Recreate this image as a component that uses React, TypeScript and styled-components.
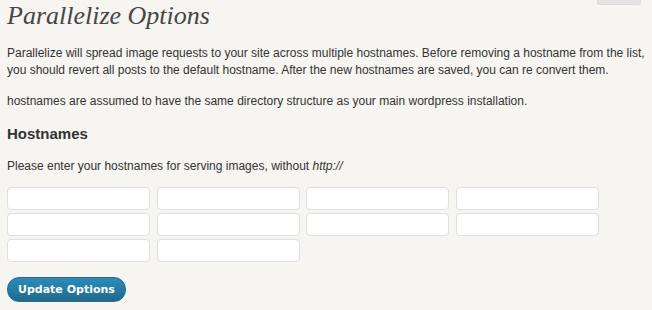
import React from 'react';
import styled, { createGlobalStyle } from 'styled-components';

const GlobalStyle = createGlobalStyle`
  html, body {
    margin: 0;
    padding: 0;
    background: #f6f5f1;
  }
`;

const Page = styled.div`
  position: relative;
  width: 652px;
  height: 310px;
  overflow: hidden;
  padding: 0 7px;
  box-sizing: border-box;
  font-family: Arial, "Liberation Sans", sans-serif;
  font-size: 12px;
  color: #333;
`;

const ScreenTab = styled.div`
  position: absolute;
  top: 0;
  right: 11px;
  width: 42px;
  height: 4px;
  background: #e4e4e4;
  border: 1px solid #dcdcdc;
  border-top: none;
  border-radius: 0 0 3px 3px;
`;

const Title = styled.h2`
  margin: 0;
  padding: 1px 0 0;
  font-family: Georgia, "Liberation Serif", serif;
  font-style: italic;
  font-weight: normal;
  font-size: 26px;
  line-height: 30px;
  color: #464646;
`;

const Para = styled.p`
  margin: 14px 0 0;
  line-height: 17px;
`;

const SubTitle = styled.h3`
  margin: 14px 0 0;
  font-size: 15px;
  font-weight: bold;
  line-height: 20px;
  color: #333;
`;

const Grid = styled.div`
  display: grid;
  grid-template-columns: repeat(4, 143px);
  column-gap: 6.5px;
  row-gap: 3px;
  margin-top: 12px;
`;

const HostInput = styled.input`
  box-sizing: border-box;
  width: 143px;
  height: 23px;
  margin: 0;
  padding: 2px 4px;
  background: #fff;
  border: 1px solid #dfdfdf;
  border-radius: 4px;
  font-family: Arial, "Liberation Sans", sans-serif;
  font-size: 12px;
  outline: none;
`;

const UpdateButton = styled.button`
  display: block;
  margin-top: 15px;
  height: 25px;
  padding: 0 10px;
  border: 1px solid #1f6d91;
  border-radius: 12px;
  background: linear-gradient(#2e8bb9, #1d6a8f);
  color: #fff;
  font-family: Verdana, "DejaVu Sans", sans-serif;
  font-weight: bold;
  font-size: 11px;
  cursor: pointer;
`;

const hosts = Array.from({ length: 10 }, (_, i) => i);

const App: React.FC = () => {
  return (
    <Page>
      <GlobalStyle />
      <ScreenTab />
      <Title>Parallelize Options</Title>
      <Para>
        Parallelize will spread image requests to your site across multiple hostnames. Before removing a hostname from the list,
        you should revert all posts to the default hostname. After the new hostnames are saved, you can re convert them.
      </Para>
      <Para>hostnames are assumed to have the same directory structure as your main wordpress installation.</Para>
      <SubTitle>Hostnames</SubTitle>
      <Para>
        Please enter your hostnames for serving images, without <em>http://</em>
      </Para>
      <Grid>
        {hosts.map((h) => (
          <HostInput key={h} type="text" />
        ))}
      </Grid>
      <UpdateButton>Update Options</UpdateButton>
    </Page>
  );
};

export default App;
